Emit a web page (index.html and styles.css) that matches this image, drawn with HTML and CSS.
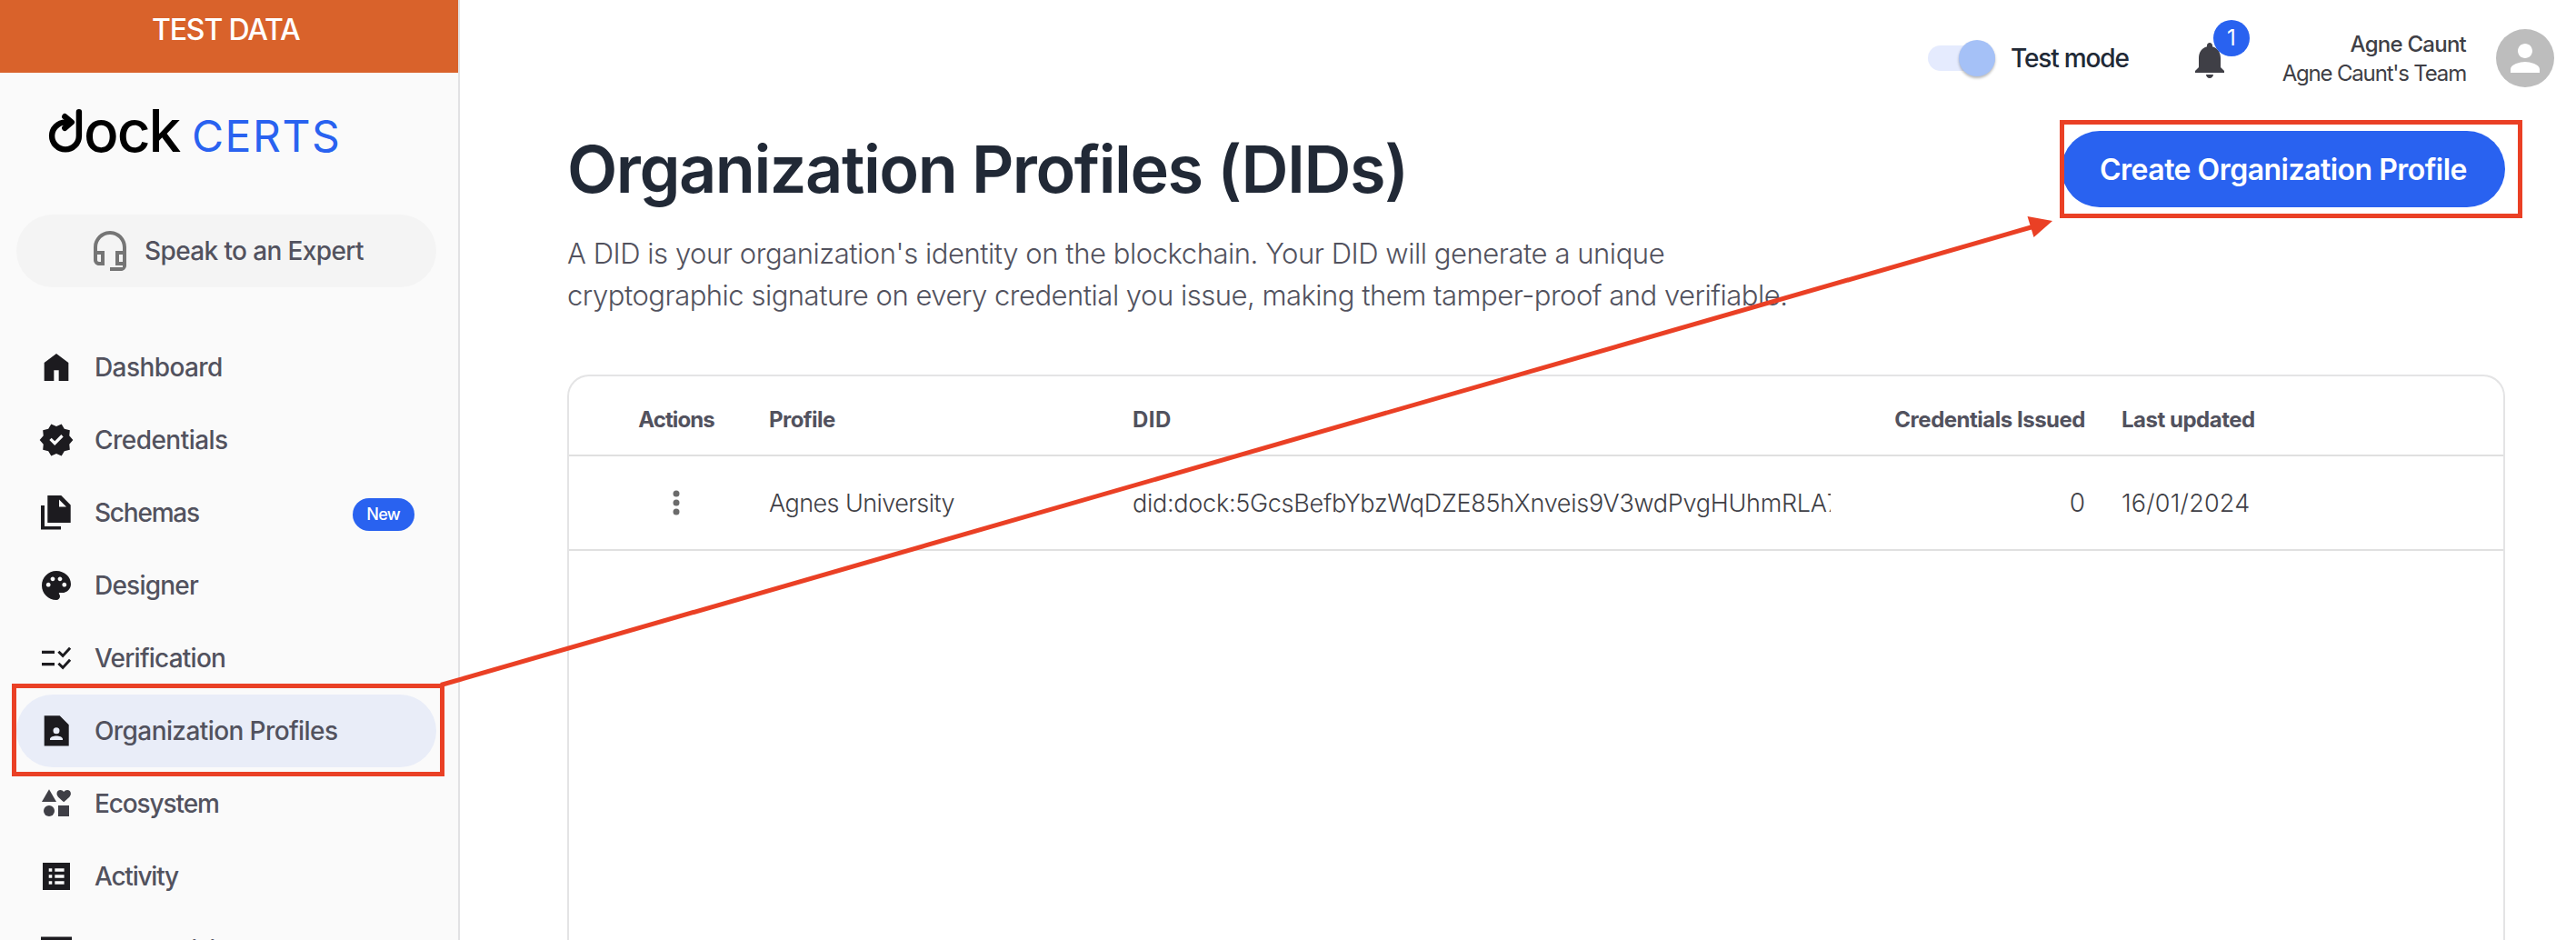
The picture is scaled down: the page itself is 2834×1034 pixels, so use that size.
FILE: index.html
```
<!DOCTYPE html>
<html lang="en">
<head>
<meta charset="utf-8">
<title>Organization Profiles (DIDs)</title>
<link rel="stylesheet" href="styles.css">
</head>
<body>
<div class="app">
  <aside class="sidebar">
    <div class="banner"><span>TEST DATA</span></div>
    <div class="logo">
      <svg class="logo-mark" viewBox="0 0 38 50" fill="none" stroke="#000" stroke-width="6.400" stroke-linecap="round" stroke-linejoin="round">
        <path d="M33.900 4.300v26.200a14.900 14.900 0 1 1-14.900-14.900h4"/>
        <path d="M18.300 9.200l7.500 6.200-7.500 6.500"/>
      </svg>
      <span class="logo-name">ock</span>
      <span class="logo-product">CERTS</span>
    </div>
    <div class="expert">
      <svg viewBox="0 0 24 24" fill="#757575"><path d="M12 1c-4.970 0-9 4.030-9 9v7c0 1.660 1.340 3 3 3h3v-8H5v-2c0-3.870 3.130-7 7-7s7 3.130 7 7v2h-4v8h4v1h-7v2h6c1.660 0 3-1.340 3-3V10c0-4.970-4.030-9-9-9zM7 14v4H6c-.55 0-1-.45-1-1v-3h2zm12 4h-2v-4h2v4z"/></svg>
      <span>Speak to an Expert</span>
    </div>
    <nav class="nav">
      <a class="item"><svg viewBox="0 -960 960 960"><path d="M160-120v-480l320-240 320 240v480H544v-280H416v280H160Z"/></svg><span class="t-dashboard">Dashboard</span></a>
      <a class="item"><svg viewBox="0 -960 960 960"><path d="m344-60-76-128-144-32 14-148-98-112 98-112-14-148 144-32 76-128 136 58 136-58 76 128 144 32-14 148 98 112-98 112 14 148-144 32-76 128-136-58-136 58Zm94-278 226-226-56-58-170 170-86-84-56 56 142 142Z"/></svg><span class="t-credentials">Credentials</span></a>
      <a class="item"><svg viewBox="0 0 40 40"><path fill-rule="evenodd" d="M10.300 1h15l10.400 10.500V31H10.300zM23 5.500v8h8zM3 12h4v23h18v3.500H3z"/></svg><span class="t-schemas">Schemas</span><b class="new">New</b></a>
      <a class="item"><svg viewBox="-.5 -.5 25 25"><path d="M12 2C6.490 2 2 6.490 2 12s4.490 10 10 10c1.380 0 2.500-1.120 2.500-2.500 0-.61-.23-1.200-.64-1.670-.08-.1-.13-.21-.13-.33 0-.28.22-.5.5-.5H16c3.310 0 6-2.690 6-6 0-4.960-4.490-9-10-9zm5.500 11c-.83 0-1.500-.67-1.500-1.500s.67-1.500 1.500-1.500 1.500.67 1.500 1.500-.67 1.500-1.500 1.500zm-3-4c-.83 0-1.500-.67-1.500-1.500S13.670 6 14.500 6s1.500.67 1.500 1.500S15.330 9 14.500 9zM5 11.500c0-.83.67-1.500 1.500-1.500s1.500.67 1.500 1.500S7.330 13 6.500 13 5 12.330 5 11.500zm6-4c0 .83-.67 1.500-1.500 1.500S8 8.330 8 7.500 8.670 6 9.500 6s1.500.67 1.500 1.500z"/></svg><span class="t-designer">Designer</span></a>
      <a class="item"><svg viewBox="0 0 40 40"><path d="M4 11.800h14v3.300H4zM4 24.900h14v3.300H4z"/><path fill="none" stroke="#1c1b1f" stroke-width="3" d="M22.400 12.800l4.700 4.600 8-8.600M22.400 25.800l4.700 4.600 8-8.600"/></svg><span class="t-verification">Verification</span></a>
      <a class="item active"><svg viewBox="0 0 40 40"><path fill-rule="evenodd" d="M6.700 3.200h17l10 10v23.400h-27zM20 16.300a3.500 3.500 0 1 0 0 7 3.500 3.500 0 0 0 0-7zM13 30v-1.200c0-2.200 4.200-3.400 7-3.400s7 1.200 7 3.400V30z"/></svg><span class="t-profiles">Organization Profiles</span></a>
      <a class="item"><svg class="soft" viewBox="0 0 40 40"><path d="M12 4.300 20 18H4z"/><path d="M28.200 18.200c-4-3.500-7.700-6-7.700-9.200 0-2.400 1.800-4 3.900-4 1.500 0 2.900.8 3.800 2.100C29.100 5.800 30.500 5 32 5c2.100 0 3.900 1.600 3.900 4 0 3.200-3.700 5.700-7.700 9.200z"/><circle cx="12" cy="28" r="6"/><path d="M22 22h12v12H22z"/></svg><span class="t-ecosystem">Ecosystem</span></a>
      <a class="item"><svg viewBox="0 0 40 40"><path fill-rule="evenodd" d="M5 5h30v30H5zM11.700 11.300v3.500h3.600v-3.500zM18.300 11.300v3.500h10.300v-3.500zM11.700 18.300v3.500h3.600v-3.500zM18.300 18.300v3.500h10.300v-3.500zM11.700 25.300v3.500h3.600v-3.500zM18.300 25.300v3.500h10.300v-3.500z"/></svg><span class="t-activity">Activity</span></a>
      <a class="item"><svg viewBox="0 0 40 40"><path fill-rule="evenodd" d="M3 6.400h34v27H3zM6.500 13.500v4h27v-4z"/></svg><span class="t-billing">Plan &amp; Billing</span></a>
    </nav>
  </aside>

  <main class="main">
    <header class="topbar">
      <div class="switch"><i class="thumb"></i></div>
      <span class="mode">Test mode</span>
      <div class="bell">
        <svg viewBox="0 0 24 24" fill="#3f3f46"><path d="M12 22c1.100 0 2-.9 2-2h-4c0 1.100.89 2 2 2zm6-6v-5c0-3.070-1.640-5.640-4.500-6.320V4c0-.83-.67-1.500-1.500-1.500s-1.500.67-1.500 1.500v.68C7.630 5.360 6 7.920 6 11v5l-2 2v1h16v-1l-2-2z"/></svg>
        <b class="count">1</b>
      </div>
      <div class="user"><span class="user-name">Agne Caunt</span><span class="user-team">Agne Caunt's Team</span></div>
      <div class="avatar"><svg viewBox="0 0 24 24" fill="#fff"><path d="M12 12c2.210 0 4-1.790 4-4s-1.790-4-4-4-4 1.790-4 4 1.790 4 4 4zm0 2c-2.670 0-8 1.340-8 4v2h16v-2c0-2.660-5.330-4-8-4z"/></svg></div>
    </header>

    <div class="heading">
      <h1>Organization Profiles (DIDs)</h1>
      <button class="create">Create Organization Profile</button>
    </div>
    <p class="intro"><span class="line-one">A DID is your organization's identity on the blockchain. Your DID will generate a unique</span><br><span class="line-two">cryptographic signature on every credential you issue, making them tamper-proof and verifiable.</span></p>

    <section class="card">
      <div class="row head">
        <span class="actions h-actions">Actions</span>
        <span class="h-profile">Profile</span>
        <span class="h-did">DID</span>
        <span class="issued h-issued">Credentials Issued</span>
        <span class="updated h-updated">Last updated</span>
      </div>
      <div class="row data">
        <span class="actions"><svg class="dots" viewBox="0 0 8 28" fill="#6b6b6b"><circle cx="4" cy="4" r="3.500"/><circle cx="4" cy="14" r="3.500"/><circle cx="4" cy="24" r="3.500"/></svg></span>
        <span class="d-profile">Agnes University</span>
        <span class="did">did:dock:5GcsBefbYbzWqDZE85hXnveis9V3wdPvgHUhmRLA7</span>
        <span class="issued d-issued">0</span>
        <span class="updated d-updated">16/01/2024</span>
      </div>
    </section>
  </main>

  <svg class="notes" viewBox="0 0 2834 1034" fill="none" stroke="#ea4025" stroke-width="5">
    <path d="M15.500 754.500h471v97h-471z"/>
    <path d="M2268.500 134.500h504v103h-504z"/>
    <path d="M485 753.500L2238 249"/>
    <path fill="#ea4025" stroke="none" d="M2258 243L2230.500 238L2237.500 261z"/>
  </svg>
</div>
</body>
</html>
```
FILE: styles.css
```
* { box-sizing: border-box; }
body { margin: 0; background: #fff; font-family: Inter, "Liberation Sans", sans-serif; }
span, b, h1, button { white-space: nowrap; }
svg { display: block; flex: none; }

.app { position: relative; display: flex; width: 2834px; height: 1034px; overflow: hidden; }

/* Sidebar */
.sidebar { flex: none; width: 506px; height: 1034px; overflow: hidden; background: #fafafa; border-right: 2px solid #e2e2e4; }
.banner { height: 80px; background: #d9622b; color: #fff; font-size: 32px; font-weight: 500; line-height: 65px; padding-left: 167px; letter-spacing: -1.16px; }
.logo { display: flex; align-items: flex-start; height: 156px; padding: 39px 0 0 53px; }
.logo-mark { width: 38px; height: 50px; }
.logo-name { width: 105px; margin-left: 1px; font-size: 64px; font-weight: 500; line-height: 50px; letter-spacing: -2px; color: #000; }
.logo-product { margin-left: 14px; font-size: 48px; line-height: 61px; letter-spacing: 1.55px; color: #2962f0; }
.expert { display: flex; align-items: center; width: 462px; height: 80px; margin-left: 18px; padding-left: 79px; gap: 14px; border-radius: 40px; background: #f4f4f4; color: #52525e; font-size: 28px; font-weight: 500; letter-spacing: -.62px; }
.expert svg { width: 48px; height: 48px; }
.nav { display: flex; flex-direction: column; margin: 48px 0 0 18px; }
.item { display: flex; flex: none; align-items: center; width: 462px; height: 80px; padding: 0 24px; border-radius: 40px; color: #52525e; font-size: 28px; font-weight: 500; }
.item svg { width: 40px; height: 40px; margin-right: 22px; fill: #1c1b1f; }
.item .soft { fill: #3f3f46; }
.active { background: #e9edf8; }
.new { height: 36px; margin: 4px 0 0 auto; padding: 0 16px 0 15px; border-radius: 18px; background: #2962f0; color: #fff; font-size: 18px; font-weight: 500; line-height: 35px; letter-spacing: -.7px; }
.t-dashboard { letter-spacing: -.59px; }
.t-credentials { letter-spacing: -.54px; }
.t-schemas { letter-spacing: -1.22px; }
.t-designer, .t-verification { letter-spacing: -.78px; }
.t-profiles { letter-spacing: -.59px; }
.t-billing { padding-top: 2px; letter-spacing: -.4px; }
.t-ecosystem { letter-spacing: -1.12px; }
.t-activity { letter-spacing: -1.23px; }

/* Content */
.main { display: flex; flex: 1; flex-direction: column; height: 1034px; padding: 0 78px 0 118px; }
.topbar { display: flex; flex: none; align-items: center; justify-content: flex-end; height: 128px; margin: 0 -54px 16px 0; }
.switch { display: flex; align-items: center; justify-content: flex-end; width: 74px; height: 28px; border-radius: 14px; background: #e5ebfe; }
.thumb { width: 40px; height: 40px; border-radius: 50%; background: #a5c1f7; box-shadow: 0 2px 3px rgba(0, 0, 0, .28); }
.mode { width: 195px; margin-left: 17px; color: #212936; font-size: 28px; font-weight: 500; letter-spacing: -1.15px; }
.bell { position: relative; width: 48px; height: 48px; margin-top: 4px; }
.bell svg { width: 48px; height: 48px; }
.count { position: absolute; left: 28px; top: -20px; width: 40px; height: 40px; border-radius: 50%; background: #2962f0; color: #fff; font-size: 24px; font-weight: 400; line-height: 40px; text-align: center; }
.user { display: flex; flex-direction: column; align-items: flex-end; width: 258px; margin: 1px 33px 0 0; color: #3f3f46; font-size: 24px; line-height: 32px; }
.user-name { font-weight: 500; letter-spacing: -.75px; }
.user-team { letter-spacing: -1.18px; }
.avatar { display: grid; place-items: center; width: 64px; height: 64px; border-radius: 50%; background: #bdbdbd; }
.avatar svg { width: 48px; height: 48px; }

.heading { display: flex; flex: none; justify-content: space-between; height: 84px; }
h1 { margin: 0; color: #212936; font-size: 72px; font-weight: 600; line-height: 84px; letter-spacing: -1.47px; }
.create { width: 488px; height: 84px; padding: 1px 0 0; border: 0; border-radius: 42px; background: #2962f0; color: #fff; font: 600 32px/83px Inter, sans-serif; letter-spacing: -.51px; }
.intro { flex: none; margin: 28px 0 64px; color: #52525e; font-size: 31px; font-weight: 350; line-height: 46px; }
.line-one { letter-spacing: -.45px; }
.line-two { letter-spacing: -.49px; }

.card { flex: 1; border: 2px solid #e4e4e5; border-bottom: 0; border-radius: 24px 24px 0 0; }
.row { display: grid; grid-template-columns: 220px 400px 820px 228px 1fr; align-items: center; border-bottom: 2px solid #e0e0e0; }
.head { height: 88px; padding-top: 8px; color: #52525e; font-size: 24px; font-weight: 700; }
.data { height: 104px; color: #3f3f46; font-size: 27px; font-weight: 350; }
.actions { padding-left: 16px; text-align: center; }
.dots { width: 8px; height: 28px; margin: 0 auto; }
.did { width: 768px; overflow: hidden; letter-spacing: -.27px; }
.issued { text-align: right; }
.updated { padding-left: 40px; }
.h-actions { letter-spacing: -.9px; }
.h-profile { letter-spacing: -.54px; }
.h-did { letter-spacing: .46px; }
.h-issued, .h-updated { letter-spacing: -.49px; }
.d-profile { letter-spacing: -.58px; }
.d-issued { font-size: 28px; }
.d-updated { letter-spacing: .2px; }

/* Callouts drawn over the page */
.notes { position: absolute; left: 0; top: 0; width: 2834px; height: 1034px; pointer-events: none; }
```
